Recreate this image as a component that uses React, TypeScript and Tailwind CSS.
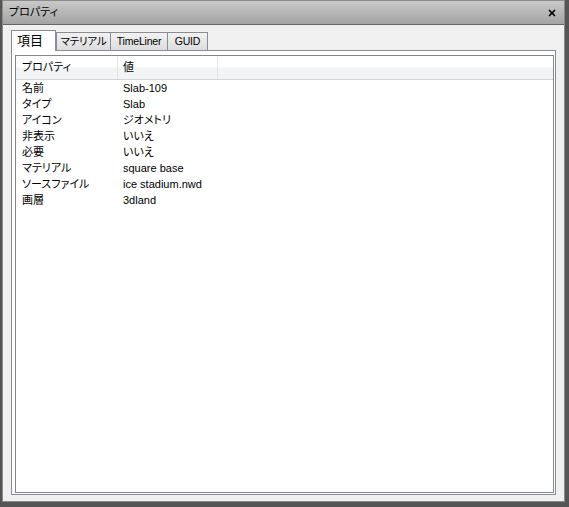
import { X } from "lucide-react";

const ROWS: [string, string][] = [
    ["名前", "Slab-109"],
    ["タイプ", "Slab"],
    ["アイコン", "ジオメトリ"],
    ["非表示", "いいえ"],
    ["必要", "いいえ"],
    ["マテリアル", "square base"],
    ["ソースファイル", "ice stadium.nwd"],
    ["画層", "3dland"],
];

const font = "font-['Liberation_Sans','Noto_Sans_CJK_JP',sans-serif] [font-feature-settings:'palt']";

function Tab({ label, active, width }: { label: string; active?: boolean; width: string }) {
    if (active) {
        return (
            <div className={`${width} h-[21px] -mb-px relative z-10 bg-white border border-b-0 border-[#898c95] flex items-center pl-[5px] text-[13px] text-black`}>
                {label}
            </div>
        );
    }
    return (
        <div className={`${width} h-[18px] bg-gradient-to-b from-[#f2f2f2] to-[#dcdcdc] border border-b-0 border-[#898c95] flex items-center justify-center text-[10.5px] tracking-[-0.2px] text-black`}>
            {label}
        </div>
    );
}

export default function App() {
    return (
        <div className={`w-[569px] h-[507px] bg-[#555555] pl-[2px] pr-[4px] pb-[5px] flex ${font}`}>
            <div className="flex-1 flex flex-col border-x border-b border-[#8a8a8a]">
                {/* タイトルバー */}
                <div className="h-[25px] flex items-center justify-between pl-[6px] pr-[7px] bg-gradient-to-b from-[#c9c9c9] to-[#a4a4a4] border-b border-[#656565] border-t border-t-[#8c8c8c]">
                    <span className="text-[11px] text-black">プロパティ</span>
                    <X size={10} strokeWidth={4} className="text-black" />
                </div>

                <div className="flex-1 flex flex-col bg-[#f0f0f0] pt-[5px] pl-[8px] pr-[8px] pb-[6px]">
                    <div className="flex items-end">
                        <Tab label="項目" active width="w-[45px]" />
                        <Tab label="マテリアル" width="w-[55px]" />
                        <Tab label="TimeLiner" width="w-[58px] -ml-px" />
                        <Tab label="GUID" width="w-[41px] -ml-px" />
                    </div>

                    <div className="flex-1 flex flex-col bg-white border border-[#898c95] pt-[4px] pl-[3px] pr-[1px] pb-[1px]">
                        <div className="flex-1 flex flex-col border border-[#828790] bg-white">
                            <div className="h-[24px] flex border-b border-[#d5d5d5] bg-gradient-to-b from-white from-45% to-[#f3f4f6] to-55% text-[11px] text-black">
                                <div className="w-[102px] flex items-center pl-[6px] border-r border-[#e3e4e6]">プロパティ</div>
                                <div className="w-[100px] flex items-center pl-[5px] border-r border-[#e3e4e6]">値</div>
                                <div className="flex-1" />
                            </div>
                            <div className="flex flex-col text-[11px] text-black">
                                {ROWS.map(([k, v]) => (
                                    <div key={k} className="h-[16px] flex items-center">
                                        <div className="w-[102px] pl-[6px]">{k}</div>
                                        <div className="pl-[5px]">{v}</div>
                                    </div>
                                ))}
                            </div>
                        </div>
                    </div>
                </div>
            </div>
        </div>
    );
}
